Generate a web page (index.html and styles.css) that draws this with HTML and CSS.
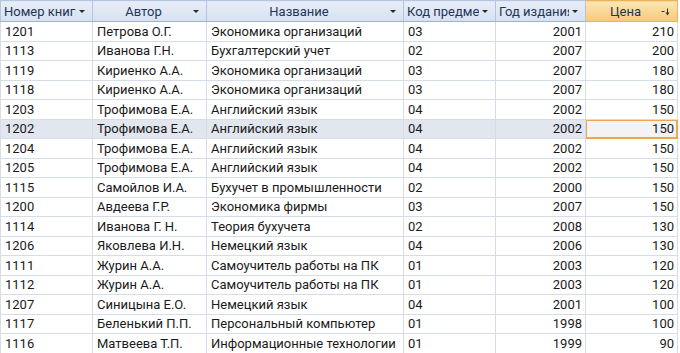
FILE: index.html
```html
<!DOCTYPE html>
<html lang="ru">
<head>
    <meta charset="UTF-8">
    <title>Книги</title>
    <link rel="stylesheet" href="styles.css">
</head>
<body>
<table class="sheet">
    <colgroup>
        <col class="c-num">
        <col class="c-author">
        <col class="c-title">
        <col class="c-code">
        <col class="c-year">
        <col class="c-price">
    </colgroup>
    <thead>
        <tr>
            <th class="left"><span class="cap">Номер книги</span><span class="drop"></span></th>
            <th><span class="cap">Автор</span><span class="drop"></span></th>
            <th><span class="cap">Название</span><span class="drop"></span></th>
            <th class="left"><span class="cap">Код предмета</span><span class="drop"></span></th>
            <th class="left"><span class="cap">Год издания</span><span class="drop"></span></th>
            <th class="sorted"><span class="cap">Цена</span>
                <svg class="sort" width="9" height="8" viewBox="0 0 9 8">
                    <path d="M0.5 3.5h3" stroke="#333" stroke-width="1"/>
                    <path d="M6.5 0.5v5" stroke="#333" stroke-width="1"/>
                    <path d="M4.5 4.5h4l-2 3z" fill="#333"/>
                </svg>
            </th>
        </tr>
    </thead>
    <tbody>
        <tr><td>1201</td><td>Петрова О.Г.</td><td>Экономика организаций</td><td>03</td><td class="num">2001</td><td class="num">210</td></tr>
        <tr><td>1113</td><td>Иванова Г.Н.</td><td>Бухгалтерский учет</td><td>02</td><td class="num">2007</td><td class="num">200</td></tr>
        <tr><td>1119</td><td>Кириенко А.А.</td><td>Экономика организаций</td><td>03</td><td class="num">2007</td><td class="num">180</td></tr>
        <tr><td>1118</td><td>Кириенко А.А.</td><td>Экономика организаций</td><td>03</td><td class="num">2007</td><td class="num">180</td></tr>
        <tr><td>1203</td><td>Трофимова Е.А.</td><td>Английский язык</td><td>04</td><td class="num">2002</td><td class="num">150</td></tr>
        <tr class="current"><td>1202</td><td>Трофимова Е.А.</td><td>Английский язык</td><td>04</td><td class="num">2002</td><td class="num active">150</td></tr>
        <tr><td>1204</td><td>Трофимова Е.А.</td><td>Английский язык</td><td>04</td><td class="num">2002</td><td class="num">150</td></tr>
        <tr><td>1205</td><td>Трофимова Е.А.</td><td>Английский язык</td><td>04</td><td class="num">2002</td><td class="num">150</td></tr>
        <tr><td>1115</td><td>Самойлов И.А.</td><td>Бухучет в промышленности</td><td>02</td><td class="num">2000</td><td class="num">150</td></tr>
        <tr><td>1200</td><td>Авдеева Г.Р.</td><td>Экономика фирмы</td><td>03</td><td class="num">2007</td><td class="num">150</td></tr>
        <tr><td>1114</td><td>Иванова Г. Н.</td><td>Теория бухучета</td><td>02</td><td class="num">2008</td><td class="num">130</td></tr>
        <tr><td>1206</td><td>Яковлева И.Н.</td><td>Немецкий язык</td><td>04</td><td class="num">2006</td><td class="num">130</td></tr>
        <tr><td>1111</td><td>Журин А.А.</td><td>Самоучитель работы на ПК</td><td>01</td><td class="num">2003</td><td class="num">120</td></tr>
        <tr><td>1112</td><td>Журин А.А.</td><td>Самоучитель работы на ПК</td><td>01</td><td class="num">2003</td><td class="num">120</td></tr>
        <tr><td>1207</td><td>Синицына Е.О.</td><td>Немецкий язык</td><td>04</td><td class="num">2001</td><td class="num">100</td></tr>
        <tr><td>1117</td><td>Беленький П.П.</td><td>Персональный компьютер</td><td>01</td><td class="num">1998</td><td class="num">100</td></tr>
        <tr><td>1116</td><td>Матвеева Т.П.</td><td>Информационные технологии</td><td>01</td><td class="num">1999</td><td class="num">90</td></tr>
    </tbody>
</table>
</body>
</html>
```

FILE: styles.css
```css
body {
    margin: 0;
    background-color: #fff;
    font-family: Roboto, "Noto Sans", sans-serif;
    font-size: 13px;
    color: #1a1a1a;
    overflow: hidden;
}

.sheet {
    width: 677px;
    table-layout: fixed;
    border-collapse: collapse;
}

.c-num { width: 92px; }
.c-author { width: 114px; }
.c-title { width: 197px; }
.c-code { width: 92px; }
.c-year { width: 90px; }
.c-price { width: 92px; }

th {
    position: relative;
    height: 20px;
    padding: 0 16px 0 4px;
    background: linear-gradient(#e8eef8, #d6e1f1);
    border: 1px solid #b4c6df;
    border-bottom-color: #9fb4d0;
    color: #1f3556;
    font-weight: normal;
    text-align: center;
    white-space: nowrap;
    overflow: hidden;
}

th.left {
    text-align: left;
    padding-left: 3px;
}

th .cap {
    display: block;
    overflow: hidden;
}

.drop {
    position: absolute;
    right: 7px;
    top: 9px;
    border-left: 3px solid transparent;
    border-right: 3px solid transparent;
    border-top: 3px solid #2b2b2b;
}

th.sorted {
    background: linear-gradient(#fde6b6, #f8c878);
    border-color: #e9b35e;
}

.sort {
    position: absolute;
    right: 7px;
    top: 7px;
}

td {
    height: 18.5px;
    padding: 0 4px;
    border: 1px solid #d7dde8;
    white-space: nowrap;
    overflow: hidden;
    line-height: 17px;
}

td.num {
    text-align: right;
    padding-right: 3px;
}

tr.current td {
    background-color: #e2e6ef;
}

tr.current td.active {
    background-color: #f3f3f3;
    box-shadow: inset 0 0 0 1px #f2a54a;
    border-color: #f2a54a;
}
```
